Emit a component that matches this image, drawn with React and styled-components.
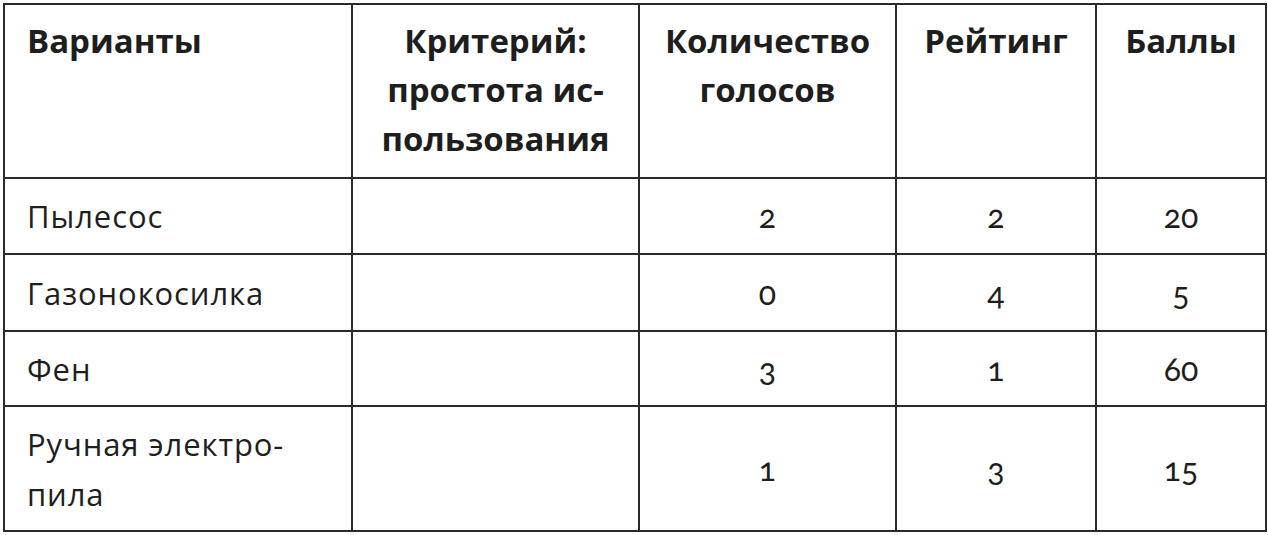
import React from "react"
import styled, { createGlobalStyle } from "styled-components"

const GlobalStyle = createGlobalStyle`
  html, body {
    margin: 0;
    padding: 0;
    background: #ffffff;
  }
`

const Page = styled.div`
  padding: 3px 0 0 3px;
  font-family: 'Open Sans', 'Noto Sans', sans-serif;
  color: #1e1e1e;
`

const Table = styled.table`
  border-collapse: collapse;
  table-layout: fixed;
  width: 1262px;
`

const HeadCell = styled.th`
  border: 2px solid #2a2a2a;
  height: 161px;
  padding: 11px 6px 0 ${(p) => (p.$left ? "22px" : "6px")};
  vertical-align: top;
  text-align: ${(p) => (p.$left ? "left" : "center")};
  font-size: 33px;
  font-weight: 700;
  line-height: 49px;
`

const Cell = styled.td`
  border: 2px solid #2a2a2a;
  height: ${(p) => p.$h}px;
  padding: 0 10px 0 ${(p) => (p.$left ? "22px" : "10px")};
  vertical-align: middle;
  text-align: ${(p) => (p.$left ? "left" : "center")};
  font-size: 31px;
  font-weight: 400;
  line-height: 50px;
  letter-spacing: 0.9px;
`

const Num = styled.span`
  font-family: 'Lato', sans-serif;
  font-size: 32px;
  letter-spacing: 0;
  font-variant-numeric: oldstyle-nums;
`

const columns = [348, 287, 257, 200, 170]

const rows = [
  { name: "Пылесос", votes: 2, rating: 2, score: 20, h: 74 },
  { name: "Газонокосилка", votes: 0, rating: 4, score: 5, h: 75 },
  { name: "Фен", votes: 3, rating: 1, score: 60, h: 73 },
  { name: ["Ручная электро-", "пила"], votes: 1, rating: 3, score: 15, h: 123 },
]

const renderLines = (text) =>
  Array.isArray(text)
    ? text.map((line, i) => (
        <React.Fragment key={i}>
          {i > 0 && <br />}
          {line}
        </React.Fragment>
      ))
    : text

export default function App() {
  return (
    <Page>
      <GlobalStyle />
      <Table>
        <colgroup>
          {columns.map((w, i) => (
            <col key={i} style={{ width: w }} />
          ))}
        </colgroup>
        <thead>
          <tr>
            <HeadCell $left>Варианты</HeadCell>
            <HeadCell>{renderLines(["Критерий:", "простота ис-", "пользования"])}</HeadCell>
            <HeadCell>{renderLines(["Количество", "голосов"])}</HeadCell>
            <HeadCell>Рейтинг</HeadCell>
            <HeadCell>Баллы</HeadCell>
          </tr>
        </thead>
        <tbody>
          {rows.map((row, i) => (
            <tr key={i}>
              <Cell $left $h={row.h}>{renderLines(row.name)}</Cell>
              <Cell $h={row.h} />
              <Cell $h={row.h}><Num>{row.votes}</Num></Cell>
              <Cell $h={row.h}><Num>{row.rating}</Num></Cell>
              <Cell $h={row.h}><Num>{row.score}</Num></Cell>
            </tr>
          ))}
        </tbody>
      </Table>
    </Page>
  )
}
